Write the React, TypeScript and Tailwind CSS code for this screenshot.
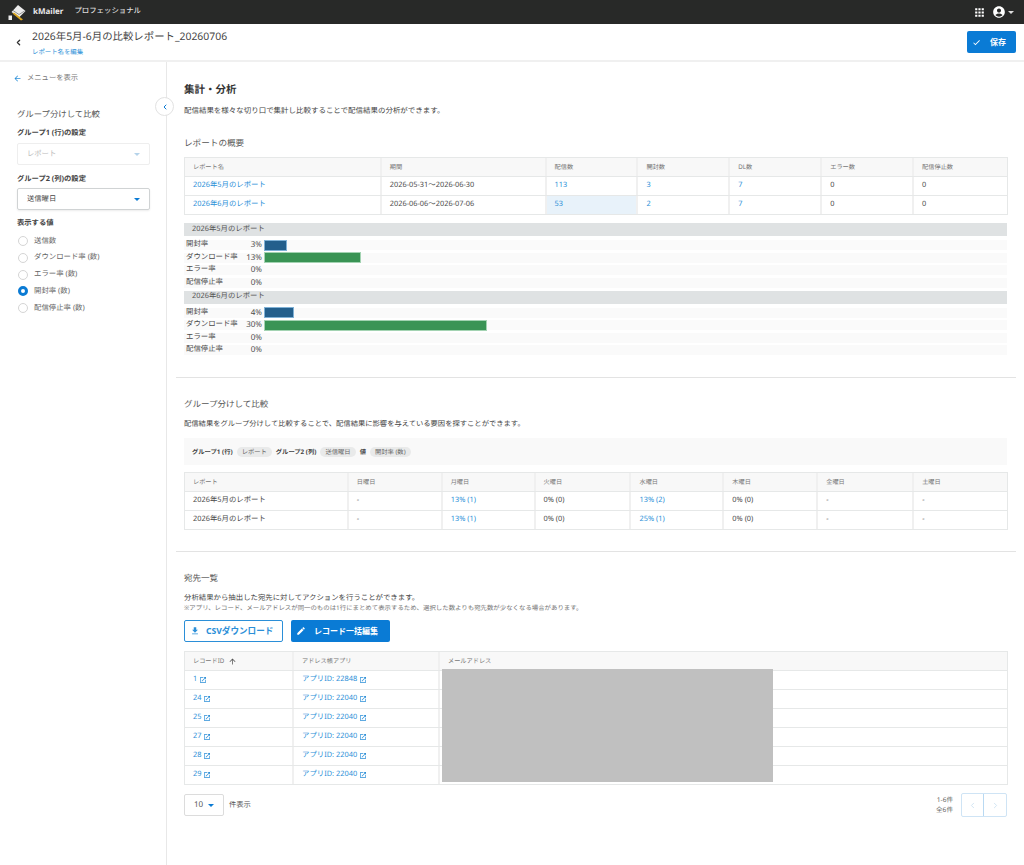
import { ReactNode } from "react";
import { ChevronLeft, ChevronRight } from "lucide-react";
import { MdAccountCircle, MdApps, MdArrowBack, MdArrowUpward, MdCheck, MdEdit, MdFileDownload, MdOpenInNew } from "react-icons/md";

const blue = "text-[#2b8fd8]";

function Caret({ className = "" }: { className?: string }) {
  return <span className={`inline-block w-0 h-0 border-x-[3px] border-x-transparent border-t-[3px] ${className}`} />;
}

function Logo() {
  return (
    <svg width="18" height="17" viewBox="0 0 18 17">
      <path d="M3.5 8 L10 1 L17.5 7 L11 13.5 Z" fill="#ececec" />
      <path d="M5 6.5 L11 10.5 L16.5 7" fill="none" stroke="#555" strokeWidth="0.6" />
      <path d="M4.5 9.5 L13 16.5 L15 15.5 L6 8.5 Z" fill="#d9a520" />
      <path d="M0.5 11.5h3.5v4.5H0.5z" fill="#ececec" />
    </svg>
  );
}

function Th({ children, w, className = "" }: { children: ReactNode; w: string; className?: string }) {
  return (
    <div className={`${w} flex items-center gap-1 px-[8px] text-[6.2px] text-[#777] border-r-2 last:border-r-0 border-[#f0f0f0] ${className}`}>
      {children}
    </div>
  );
}

function Td({ children, w, className = "" }: { children: ReactNode; w: string; className?: string }) {
  return (
    <div className={`${w} flex items-center gap-[2px] px-[8px] text-[7.4px] text-[#4a4a4a] border-r-2 last:border-r-0 border-[#f0f0f0] ${className}`}>
      {children}
    </div>
  );
}

function Table({ children }: { children: ReactNode }) {
  return <div className="border border-[#e6e8e8] w-[824px] bg-white">{children}</div>;
}

function HeadRow({ children, h = "h-[18px]" }: { children: ReactNode; h?: string }) {
  return <div className={`flex ${h} bg-[#f8f8f8]`}>{children}</div>;
}

function Row({ children, h = "h-[19px]" }: { children: ReactNode; h?: string }) {
  return <div className={`flex ${h} border-t border-[#e6e8e8]`}>{children}</div>;
}

const c1 = ["w-[197px]", "w-[165px]", "w-[92px]", "w-[92px]", "w-[92px]", "w-[92px]", "w-[93px]"];
const c2 = ["w-[164px]", "w-[94px]", "w-[93px]", "w-[96px]", "w-[93px]", "w-[94px]", "w-[96px]", "w-[93px]"];
const c3 = ["w-[109px]", "w-[146px]", "flex-1"];

function MetricRow({ label, pct, bar, color }: { label: string; pct: string; bar?: number; color?: string }) {
  return (
    <div className="flex h-[10px] mb-[2.5px] items-center bg-[#fafafa] text-[7.4px] text-[#4a4a4a]">
      <div className="w-[56px] pl-[2px] whitespace-nowrap">{label}</div>
      <div className="w-[22px] text-right text-[8px]">{pct}</div>
      <div className="ml-[2px] h-full flex items-center">
        {bar ? <div className={`h-[11px] ${color}`} style={{ width: bar }} /> : null}
      </div>
    </div>
  );
}

function MetricGroup({ title, open, dl, openW, dlW }: { title: string; open: string; dl: string; openW: number; dlW: number }) {
  return (
    <div>
      <div className="h-[13px] bg-[#dfe2e3] pl-[8px] flex items-center text-[7.4px] text-[#555] mb-[4px]">{title}</div>
      <MetricRow label="開封率" pct={open} bar={openW} color="bg-[#235f8c] border border-[#7fb1d6]" />
      <MetricRow label="ダウンロード率" pct={dl} bar={dlW} color="bg-[#3a9455] border border-[#a3d3b2]" />
      <MetricRow label="エラー率" pct="0%" />
      <MetricRow label="配信停止率" pct="0%" />
    </div>
  );
}

function Radio({ label, checked }: { label: string; checked?: boolean }) {
  return (
    <div className="flex items-center h-[16.7px] gap-[6px] pl-[18px] text-[7.4px] text-[#666]">
      {checked ? (
        <span className="w-[10px] h-[10px] rounded-full bg-white border-[3px] border-[#0b7bd4]" />
      ) : (
        <span className="w-[10px] h-[10px] rounded-full bg-white border border-[#d5d5d5]" />
      )}
      <span>{label}</span>
    </div>
  );
}

function Chip({ children }: { children: ReactNode }) {
  return <span className="h-[10px] px-[5px] flex items-center rounded-full bg-[#e9eaea] text-[6.3px] text-[#666] font-normal">{children}</span>;
}

function Link({ children }: { children: ReactNode }) {
  return <span className={blue}>{children}</span>;
}

const rows3 = [
  ["1", "22848"],
  ["24", "22040"],
  ["25", "22040"],
  ["27", "22040"],
  ["28", "22040"],
  ["29", "22040"],
];

export default function App() {
  return (
    <div className="w-[1024px] h-[865px] overflow-hidden bg-white flex flex-col [text-rendering:geometricPrecision] [font-family:'Noto_Sans','Noto_Sans_CJK_JP',sans-serif]">
      {/* top bar */}
      <header className="h-[24px] shrink-0 bg-[#282928] flex items-center pl-[8px] pr-[10px]">
        <Logo />
        <span className="ml-[7px] text-[8px] font-bold text-[#e8e8e8]">kMailer</span>
        <span className="ml-[11px] text-[7.4px] font-medium text-[#dcdcdc]">プロフェッショナル</span>
        <div className="ml-auto flex items-center">
          <MdApps size={13} className="text-white" />
          <MdAccountCircle size={14} className="ml-[6px] text-white" />
          <Caret className="ml-[2px] border-t-[#ddd]" />
        </div>
      </header>
      {/* sub header */}
      <div className="h-[38px] shrink-0 flex items-center border-b-2 border-[#f0f0f0] pl-[14px] pr-[8px]">
        <ChevronLeft size={9} strokeWidth={3.5} className="text-[#333] mt-[1px]" />
        <div className="ml-[9px] mt-[2px]">
          <div className="text-[10.4px] leading-[16px] text-[#444]">2026年5月-6月の比較レポート_20260706</div>
          <div className={`text-[6.4px] leading-[10px] mt-[2px] ${blue}`}>レポート名を編集</div>
        </div>
        <button className="ml-auto w-[49px] h-[22px] rounded-[2px] bg-[#0a7bd5] flex items-center pl-[5px] text-white text-[8px] font-bold">
          <MdCheck size={9} />
          <span className="ml-[9px]">保存</span>
        </button>
      </div>
      <div className="flex flex-1 min-h-0">
        {/* sidebar */}
        <aside className="relative w-[167px] shrink-0 border-r border-[#e8e8e8] pt-[11px]">
          <div className="flex items-center h-[10px] pl-[13px] gap-[5px] text-[7.3px] text-[#777]">
            <MdArrowBack size={9} className={blue} />
            <span>メニューを表示</span>
          </div>
          <div className="mt-[26px] pl-[17px] text-[8.4px] leading-[12px] text-[#555]">グループ分けして比較</div>
          <div className="mt-[5px] pl-[17px] h-[14px] flex items-center text-[7.3px] font-bold text-[#444]">グループ1 (行)の設定</div>
          <div className="ml-[17px] mt-[3px] w-[133px] h-[22px] rounded-[2px] border border-[#eeeeee] flex items-center px-[9px] text-[7.3px] text-[#bbb]">
            <span>レポート</span>
            <Caret className="ml-auto border-t-[#b5d3ea]" />
          </div>
          <div className="mt-[7px] pl-[17px] h-[14px] flex items-center text-[7.3px] font-bold text-[#444]">グループ2 (列)の設定</div>
          <div className="ml-[17px] mt-[2px] w-[133px] h-[22px] rounded-[2px] border border-[#d0d3d4] shadow-[0_1px_2px_rgba(0,0,0,0.08)] flex items-center px-[9px] text-[7.3px] text-[#444]">
            <span>送信曜日</span>
            <Caret className="ml-auto border-t-[#0b7bd4] border-x-[3.5px]" />
          </div>
          <div className="mt-[6px] pl-[17px] h-[14px] flex items-center text-[7.3px] font-bold text-[#444]">表示する値</div>
          <div className="mt-[3px]">
            <Radio label="送信数" />
            <Radio label="ダウンロード率 (数)" />
            <Radio label="エラー率 (数)" />
            <Radio label="開封率 (数)" checked />
            <Radio label="配信停止率 (数)" />
          </div>
          <button className="absolute left-[155px] top-[35px] w-[19px] h-[19px] rounded-full bg-white border border-[#e2e2e2] flex items-center justify-center">
            <ChevronLeft size={8} strokeWidth={3} className="text-[#0b7bd4]" />
          </button>
        </aside>
        {/* main */}
        <main className="flex-1 min-w-0 pl-[9px] pr-[8px]">
          {/* summary */}
          <section className="px-[8px] pt-[20px] h-[316px] border-b border-[#e3e3e3]">
            <h1 className="text-[10.5px] leading-[16px] font-bold text-[#333]">集計・分析</h1>
            <p className="mt-[8px] text-[7.47px] leading-[11px] text-[#444]">配信結果を様々な切り口で集計し比較することで配信結果の分析ができます。</p>
            <h2 className="mt-[20px] text-[8.6px] leading-[12px] text-[#555]">レポートの概要</h2>
            <div className="mt-[8px]">
              <Table>
                <HeadRow>
                  {["レポート名", "期間", "配信数", "開封数", "DL数", "エラー数", "配信停止数"].map((t, i) => (
                    <Th key={t} w={c1[i]}>{t}</Th>
                  ))}
                </HeadRow>
                <Row>
                  <Td w={c1[0]}><Link>2026年5月のレポート</Link></Td>
                  <Td w={c1[1]}>2026-05-31〜2026-06-30</Td>
                  <Td w={c1[2]}><Link>113</Link></Td>
                  <Td w={c1[3]}><Link>3</Link></Td>
                  <Td w={c1[4]}><Link>7</Link></Td>
                  <Td w={c1[5]}>0</Td>
                  <Td w={c1[6]}>0</Td>
                </Row>
                <Row>
                  <Td w={c1[0]}><Link>2026年6月のレポート</Link></Td>
                  <Td w={c1[1]}>2026-06-06〜2026-07-06</Td>
                  <Td w={c1[2]} className="bg-[#e8f2fa]"><Link>53</Link></Td>
                  <Td w={c1[3]}><Link>2</Link></Td>
                  <Td w={c1[4]}><Link>7</Link></Td>
                  <Td w={c1[5]}>0</Td>
                  <Td w={c1[6]}>0</Td>
                </Row>
              </Table>
            </div>
            <div className="mt-[8px] w-[823px] flex flex-col gap-[0.5px]">
              <MetricGroup title="2026年5月のレポート" open="3%" dl="13%" openW={23} dlW={97} />
              <MetricGroup title="2026年6月のレポート" open="4%" dl="30%" openW={30} dlW={223} />
            </div>
          </section>
          {/* group compare */}
          <section className="px-[8px] pt-[21px] h-[174px] border-b border-[#e3e3e3]">
            <h2 className="text-[8.5px] leading-[12px] text-[#555]">グループ分けして比較</h2>
            <p className="mt-[8px] text-[7.3px] leading-[11px] text-[#444]">配信結果をグループ分けして比較することで、配信結果に影響を与えている要因を探すことができます。</p>
            <div className="mt-[8px] w-[823px] h-[27px] bg-[#f9f9f9] flex items-center gap-[4px] pl-[8px] text-[6.3px] font-bold text-[#444]">
              <span>グループ1 (行)</span>
              <Chip>レポート</Chip>
              <span>グループ2 (列)</span>
              <Chip>送信曜日</Chip>
              <span>値</span>
              <Chip>開封率 (数)</Chip>
            </div>
            <div className="mt-[7px]">
              <Table>
                <HeadRow>
                  {["レポート", "日曜日", "月曜日", "火曜日", "水曜日", "木曜日", "金曜日", "土曜日"].map((t, i) => (
                    <Th key={t} w={c2[i]}>{t}</Th>
                  ))}
                </HeadRow>
                {[
                  ["2026年5月のレポート", "13% (1)", "13% (2)"],
                  ["2026年6月のレポート", "13% (1)", "25% (1)"],
                ].map(([n, a, b]) => (
                  <Row key={n}>
                    <Td w={c2[0]}>{n}</Td>
                    <Td w={c2[1]}>-</Td>
                    <Td w={c2[2]}><Link>{a}</Link></Td>
                    <Td w={c2[3]}>0% (0)</Td>
                    <Td w={c2[4]}><Link>{b}</Link></Td>
                    <Td w={c2[5]}>0% (0)</Td>
                    <Td w={c2[6]}>-</Td>
                    <Td w={c2[7]}>-</Td>
                  </Row>
                ))}
              </Table>
            </div>
          </section>
          {/* recipients */}
          <section className="px-[8px] pt-[21px]">
            <h2 className="text-[8.5px] leading-[12px] text-[#555]">宛先一覧</h2>
            <p className="mt-[9px] text-[7.4px] leading-[9px] text-[#444]">分析結果から抽出した宛先に対してアクションを行うことができます。</p>
            <p className="mt-[1px] text-[6.42px] leading-[8px] text-[#777]">※アプリ、レコード、メールアドレスが同一のものは1行にまとめて表示するため、選択した数よりも宛先数が少なくなる場合があります。</p>
            <div className="mt-[8px] flex gap-[8px]">
              <button className={`w-[99px] h-[22px] rounded-[2px] bg-white border border-[#2b8fd8] flex items-center pl-[5px] text-[8.6px] font-bold ${blue}`}>
                <MdFileDownload size={10} />
                <span className="ml-[6px]">CSVダウンロード</span>
              </button>
              <button className="w-[99px] h-[22px] rounded-[2px] bg-[#0a7bd5] flex items-center pl-[5px] text-[8px] font-bold text-white">
                <MdEdit size={10} />
                <span className="ml-[8px]">レコード一括編集</span>
              </button>
            </div>
            <div className="relative mt-[9px]">
              <Table>
                <HeadRow>
                  <Th w={c3[0]}>レコードID <MdArrowUpward size={9} className="text-[#555]" /></Th>
                  <Th w={c3[1]}>アドレス帳アプリ</Th>
                  <Th w={c3[2]}>メールアドレス</Th>
                </HeadRow>
                {rows3.map(([id, app]) => (
                  <Row key={id} h="h-[19px]">
                    <Td w={c3[0]}><Link>{id}</Link><MdOpenInNew size={8} className={blue} /></Td>
                    <Td w={c3[1]}><Link>アプリID: {app}</Link><MdOpenInNew size={8} className={blue} /></Td>
                    <Td w={c3[2]}>{""}</Td>
                  </Row>
                ))}
              </Table>
              <div className="absolute left-[258px] top-[18px] w-[331px] h-[113px] bg-[#c0c0c0]" />
            </div>
            <div className="mt-[8px] w-[823px] flex items-center">
              <div className="w-[40px] h-[22px] rounded-[2px] border border-[#dcdcdc] flex items-center px-[9px] text-[8px] text-[#555]">
                <span>10</span>
                <Caret className="ml-auto border-t-[#0b7bd4]" />
              </div>
              <span className="ml-[5px] text-[7.3px] text-[#555]">件表示</span>
              <div className="ml-auto text-right text-[6.6px] leading-[10px] text-[#666]">
                <div>1-6件</div>
                <div>全6件</div>
              </div>
              <div className="ml-[8px] flex h-[24px] rounded-[2px] border border-[#cfe4f5]">
                <div className="w-[22px] flex items-center justify-center border-r border-[#b9d9f2]"><ChevronLeft size={9} className="text-[#c4dcef]" /></div>
                <div className="w-[22px] flex items-center justify-center"><ChevronRight size={9} className="text-[#c4dcef]" /></div>
              </div>
            </div>
          </section>
        </main>
      </div>
    </div>
  );
}
